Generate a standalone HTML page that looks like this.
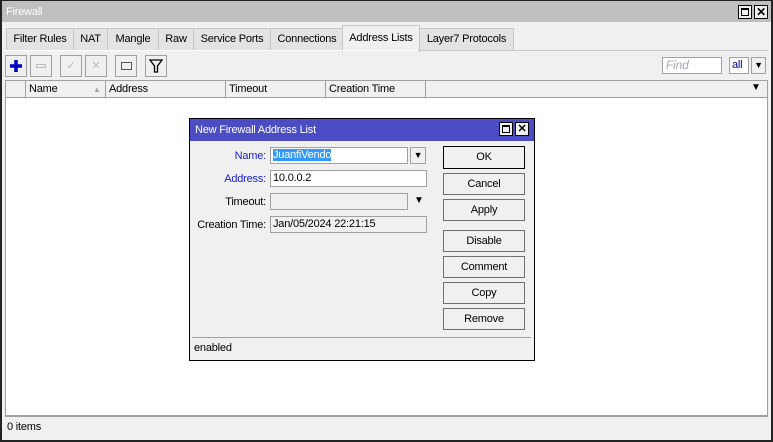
<html><head><style>
body{margin:0;width:773px;height:442px;overflow:hidden;background:#f0f0f0;font-family:"Liberation Sans",sans-serif;font-size:11px;letter-spacing:-0.2px;color:#000}
.a{position:absolute;box-sizing:border-box}
.tab{position:absolute;top:28px;height:22px;border:1px solid #c8c8c8;border-bottom:none;background:#e3e3e3;line-height:21px;text-align:center}
.tb{position:absolute;top:55px;width:22px;height:22px;border:1px solid #a0a0a0;background:#f0f0f0;box-sizing:border-box}
.hd{position:absolute;top:81px;height:17px;border-right:1px solid #a0a0a0;line-height:17px;padding-left:3px;box-sizing:border-box}
.btn{position:absolute;left:443px;width:82px;height:22px;border:1px solid #707070;background:#f0f0f0;text-align:center;line-height:20px;box-sizing:border-box}
.lbl{position:absolute;right:507px;text-align:right;line-height:16px}
.in{position:absolute;left:270px;height:17px;border:1px solid #a0a0a0;box-sizing:border-box;line-height:15px;padding-left:2px}
</style></head><body>
<div class="a" style="left:0;top:0;width:773px;height:442px;border:2px solid #222;border-top:1px solid #222"></div>
<div class="a" style="left:2px;top:1px;width:769px;height:21px;background:#bfbfbf;color:#fff;line-height:22px;padding-left:4px">Firewall</div>
<div class="a" style="left:738px;top:5px;width:14px;height:14px;border:1px solid #000;background:#f0f0f0"><div class="a" style="left:2px;top:2px;width:8px;height:8px;border:1px solid #000;border-top-width:2px"></div></div>
<div class="a" style="left:754px;top:5px;width:14px;height:14px;border:1px solid #000;background:#f0f0f0;font-size:12px;font-weight:bold;line-height:12px;text-align:center">✕</div>
<div class="tab" style="left:6px;width:66px">Filter Rules</div>
<div class="tab" style="left:73px;width:33px">NAT</div>
<div class="tab" style="left:107px;width:50px">Mangle</div>
<div class="tab" style="left:158px;width:34px">Raw</div>
<div class="tab" style="left:193px;width:76px">Service Ports</div>
<div class="tab" style="left:270px;width:72px">Connections</div>
<div class="tab" style="left:342px;top:25px;height:26px;width:76px;background:#f0f0f0;line-height:24px">Address Lists</div>
<div class="tab" style="left:419px;width:93px">Layer7 Protocols</div>
<div class="a" style="left:5px;top:50px;width:763px;height:1px;background:#fff"></div>
<div class="a" style="left:418px;top:50px;width:350px;height:1px;background:#c8c8c8"></div>
<div class="tb" style="left:5px"><svg width="20" height="20"><path d="M10 4v12M4 10h12" stroke="#0000c0" stroke-width="3.5"/></svg></div>
<div class="tb" style="left:30px"><div class="a" style="left:5px;top:8px;width:10px;height:4px;border:1px solid #bbb"></div></div>
<div class="tb" style="left:60px;color:#bbb;text-align:center;line-height:20px">✓</div>
<div class="tb" style="left:85px;color:#bbb;text-align:center;line-height:20px">✕</div>
<div class="tb" style="left:115px"><div class="a" style="left:5px;top:6px;width:11px;height:8px;border:1px solid #555"></div></div>
<div class="tb" style="left:145px"><svg width="20" height="20"><path d="M4 4h12l-4.5 6v6h-3v-6z" fill="none" stroke="#000" stroke-width="1.3"/></svg></div>
<div class="a" style="left:662px;top:57px;width:60px;height:17px;background:#fff;border:1px solid #a0a0a0;color:#a8a8b8;font-style:italic;padding-left:3px;line-height:15px;font-size:12px">Find</div>
<div class="a" style="left:729px;top:57px;width:20px;height:17px;background:#fff;border:1px solid #a0a0a0;padding-left:2px;line-height:15px;color:#000080">all</div>
<div class="a" style="left:751px;top:57px;width:15px;height:17px;border:1px solid #a0a0a0;font-size:9px;text-align:center;line-height:15px">▼</div>
<div class="a" style="left:5px;top:80px;width:763px;height:336px;background:#fff;border:1px solid #a0a0a0"></div>
<div class="a" style="left:6px;top:81px;width:761px;height:17px;background:#f0f0f0;border-bottom:1px solid #a0a0a0"></div>
<div class="hd" style="left:6px;width:20px"></div>
<div class="hd" style="left:26px;width:80px">Name<span style="position:absolute;left:67px;color:#aaa;font-size:8px">▲</span></div>
<div class="hd" style="left:106px;width:120px">Address</div>
<div class="hd" style="left:226px;width:100px">Timeout</div>
<div class="hd" style="left:326px;width:100px">Creation Time</div>
<div class="a" style="left:751px;top:82px;font-size:10px">▼</div>
<div class="a" style="left:5px;top:416px;width:763px;height:20px;border-top:1px solid #a0a0a0;line-height:20px;padding-left:2px">0 items</div>
<!-- dialog -->
<div class="a" style="left:189px;top:118px;width:346px;height:243px;border:1px solid #000;background:#f0f0f0"></div>
<div class="a" style="left:190px;top:119px;width:344px;height:22px;background:#4c4cc4;color:#fff;line-height:22px;padding-left:5px">New Firewall Address List</div>
<div class="a" style="left:499px;top:122px;width:14px;height:14px;border:1px solid #000;background:#f0f0f0"><div class="a" style="left:2px;top:2px;width:8px;height:8px;border:1px solid #000;border-top-width:2px"></div></div>
<div class="a" style="left:515px;top:122px;width:14px;height:14px;border:1px solid #000;background:#f0f0f0;font-weight:bold;line-height:12px;text-align:center">✕</div>
<div class="lbl" style="top:148px;color:#2020d0">Name:</div>
<div class="in" style="top:147px;width:138px;background:#fff"><span style="background:#3399ff;color:#fff">JuanfiVendo</span></div>
<div class="a" style="left:410px;top:147px;width:16px;height:17px;border:1px solid #a0a0a0;font-size:9px;text-align:center;line-height:15px">▼</div>
<div class="lbl" style="top:171px;color:#2020d0">Address:</div>
<div class="in" style="top:170px;width:157px;background:#fff">10.0.0.2</div>
<div class="lbl" style="top:194px">Timeout:</div>
<div class="in" style="top:193px;width:138px;background:#f0f0f0"></div>
<div class="a" style="left:414px;top:195px;font-size:10px">▼</div>
<div class="lbl" style="top:217px">Creation Time:</div>
<div class="in" style="top:216px;width:157px;background:#f0f0f0">Jan/05/2024 22:21:15</div>
<div class="btn" style="top:146px;border:1px solid #000;height:23px">OK</div>
<div class="btn" style="top:173px">Cancel</div>
<div class="btn" style="top:199px">Apply</div>
<div class="btn" style="top:230px">Disable</div>
<div class="btn" style="top:256px">Comment</div>
<div class="btn" style="top:282px">Copy</div>
<div class="btn" style="top:308px">Remove</div>
<div class="a" style="left:192px;top:337px;width:339px;height:21px;border-top:1px solid #a0a0a0;line-height:20px;padding-left:2px">enabled</div>
</body></html>
